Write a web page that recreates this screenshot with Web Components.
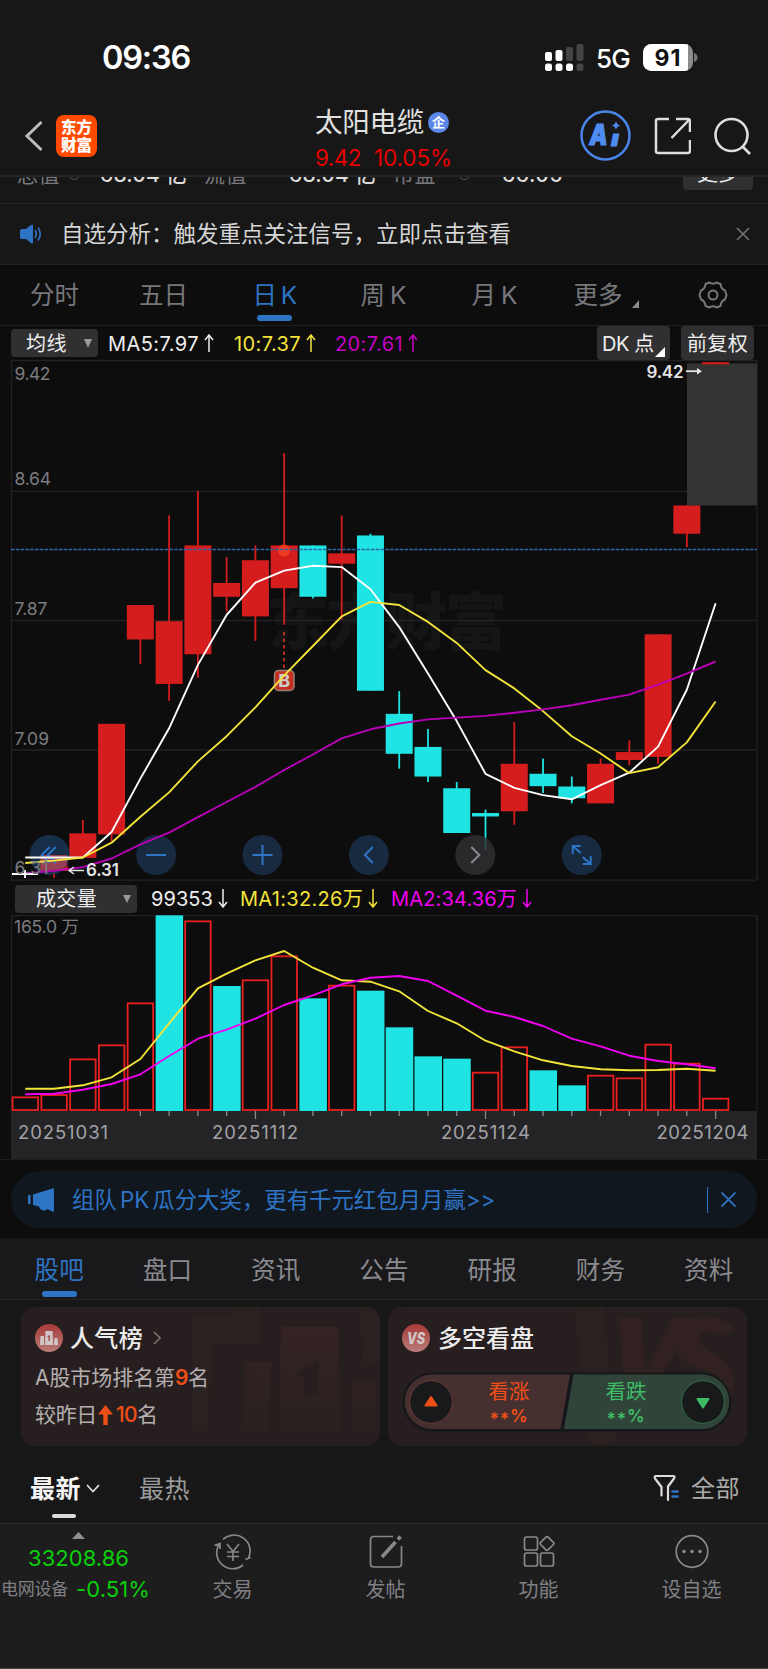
<!DOCTYPE html>
<html lang="zh-CN">
<head>
<meta charset="utf-8">
<title>太阳电缆</title>
<style>
    html { background: #171717; }
    body {
        margin: 0;
        width: 768px;
        height: 1669px;
        overflow: hidden;
        font-family: Inter, "Noto Sans CJK SC", sans-serif;
        color: #d8d8d8;
        background: #171717;
    }
    .cards { display: flex; gap: 8px; height: 139px; padding: 7px 21px; background: #171717; }
</style>
</head>
<body>
<status-bar></status-bar>
<stock-header></stock-header>
<quote-strip></quote-strip>
<signal-notice>自选分析：触发重点关注信号，立即点击查看</signal-notice>
<period-tabs></period-tabs>
<ma-toolbar></ma-toolbar>
<kline-chart></kline-chart>
<volume-toolbar></volume-toolbar>
<volume-chart></volume-chart>
<promo-banner>组队 PK 瓜分大奖，更有千元红包月月赢&gt;&gt;</promo-banner>
<section-tabs items="股吧,盘口,资讯,公告,研报,财务,资料"></section-tabs>
<div class="cards">
    <rank-card></rank-card>
    <versus-card></versus-card>
</div>
<feed-tabs></feed-tabs>
<bottom-bar></bottom-bar>

<script>
const define = (name, html) => {
    const template = document.createElement('template')
    template.innerHTML = html
    customElements.define(name, class extends HTMLElement {
        constructor() {
            super();
            this.attachShadow({mode: 'open'});
            this.shadowRoot.appendChild(template.content.cloneNode(true));
        }
    });
}

// a single line of text tracked out (or in) to the width given in w
class FitText extends HTMLElement {
    constructor() {
        super();
        this.attachShadow({mode: 'open'});
        this.shadowRoot.innerHTML = `
            <style>
                :host { display: block; white-space: nowrap; line-height: 1.2; flex: none; }
                span { display: inline-block; vertical-align: top; }
            </style>
            <span><slot></slot></span>`
    }

    connectedCallback() {
        const span = this.shadowRoot.querySelector('span')
        const width = Number(this.getAttribute('w'))
        if (!width) return
        const count = this.textContent.length
        span.style.letterSpacing = (width - span.getBoundingClientRect().width) / count + 'px'
        this.style.width = width + 'px'
    }
}
customElements.define('fit-text', FitText)

define('status-bar', `
    <style>
        :host { display: flex; align-items: center; height: 100px; padding: 14px 70px 0 102px; box-sizing: border-box; color: #fff; }
        .time { font-size: 32.500px; font-weight: 600; flex: 1; padding-top: 1px; }
        .net { font-size: 26px; font-weight: 500; margin: 3px 13px 0 12px; }
        svg { display: block; }
    </style>
    <div class="time"><fit-text w="88">09:36</fit-text></div>
    <svg width="39" height="27" viewBox="0 0 39 27">
        <g fill="#fff">
            <rect x="0" y="8" width="7" height="9" rx="2"/><rect x="10.500" y="6" width="7" height="11" rx="2"/>
            <rect x="0" y="19.500" width="7" height="7.500" rx="2.500"/><rect x="10.500" y="19.500" width="7" height="7.500" rx="2.500"/><rect x="21" y="19.500" width="7" height="7.500" rx="2.500"/>
        </g>
        <g fill="#444">
            <rect x="21" y="3" width="7" height="14" rx="2"/><rect x="31.500" y="0" width="7" height="17" rx="2"/><rect x="31.500" y="19.500" width="7" height="7.500" rx="2.500"/>
        </g>
    </svg>
    <div class="net"><fit-text w="34">5G</fit-text></div>
    <svg width="55" height="27" viewBox="0 0 55 27">
        <clipPath id="cell"><rect width="50" height="27" rx="8.500"/></clipPath>
        <g clip-path="url(#cell)"><rect width="50" height="27" fill="#8c8c8c"/><rect width="45" height="27" fill="#fff"/></g>
        <path d="M51 9q3.500 1 3.500 4.500T51 18z" fill="#777"/>
        <text x="24.500" y="22" text-anchor="middle" font-size="23" font-weight="700" fill="#111" textLength="26">91</text>
    </svg>
`)

define('stock-header', `
    <style>
        :host { display: flex; align-items: center; height: 77px; box-sizing: border-box; padding: 0 17px 4px 24px; border-bottom: 2px solid #262626; }
        .logo {
            display: grid; place-content: center; width: 41px; height: 42px; margin-left: 12px;
            border-radius: 8px; background: #ff4a00; color: #fff; text-align: center;
            font: 900 15.500px/17.500px "Noto Sans CJK SC", sans-serif;
        }
        .title { margin-left: 218px; width: 138px; padding-top: 4px; }
        .name { display: flex; align-items: center; gap: 4px; font-size: 27.500px; color: #e0e0e0; height: 36px; }
        .badge { width: 21px; height: 21px; border-radius: 50%; background: #5b87e8; color: #fff; font: 700 13px/20px "Noto Sans CJK SC", sans-serif; text-align: center; }
        .price { display: flex; gap: 13px; font-size: 22.500px; line-height: 1; color: #e60000; margin-top: 4px; }
        .icons { display: flex; align-items: center; margin-left: auto; }
        svg { display: block; }
    </style>
    <svg width="20" height="32" viewBox="0 0 20 32" fill="none" stroke="#bdbdbd" stroke-width="3"><path d="M17.500 2L3 16l14.500 14"/></svg>
    <div class="logo">东方<br>财富</div>
    <div class="title">
        <div class="name"><fit-text w="109">太阳电缆</fit-text><span class="badge">企</span></div>
        <div class="price"><fit-text w="46">9.42</fit-text><fit-text w="78">10.05%</fit-text></div>
    </div>
    <div class="icons">
        <svg width="51" height="51" viewBox="0 0 51 51">
            <circle cx="25.500" cy="25.500" r="24" fill="none" stroke="#4a86ea" stroke-width="2.500"/>
            <text x="9.500" y="35" font-size="29" font-weight="900" font-style="italic" fill="#4f8cf2" stroke="#4f8cf2" stroke-width="1.200" textLength="18" lengthAdjust="spacingAndGlyphs">A</text>
            <text x="31" y="36" font-size="21" font-weight="900" font-style="italic" fill="#4f8cf2" stroke="#4f8cf2" stroke-width=".8" textLength="8" lengthAdjust="spacingAndGlyphs">ı</text>
            <path d="M36 11q.8 3.700 4.300 4.500-3.500.8-4.300 4.500-.8-3.700-4.300-4.500 3.500-.8 4.300-4.500z" fill="#4f8cf2"/>
        </svg>
        <svg width="37" height="38" viewBox="0 0 37 38" fill="none" stroke="#ddd" stroke-width="2.500" style="margin-left:23px">
            <path d="M15 2H4Q2 2 2 4v30q0 2 2 2h30q2 0 2-2V23M22 2h12q2 0 2 2v11M35 3L17.500 21"/>
        </svg>
        <svg width="37" height="38" viewBox="0 0 37 38" fill="none" stroke="#ddd" stroke-width="2.600" style="margin-left:23px">
            <circle cx="17.500" cy="18" r="16"/><path d="M28 29l8 8"/>
        </svg>
    </div>
`)

// quote details scrolled up under the header, only the lower part of the line shows
define('quote-strip', `
    <style>
        :host { display: block; height: 26px; overflow: hidden; border-bottom: 1px solid #242424; }
        .line { display: flex; align-items: center; margin-top: -19px; height: 32px; font-size: 21px; padding-left: 17px; color: #77777c; }
        .value { color: #dcdcdc; font-weight: 500; }
        fit-text { margin-top: 1px; }
        i { width: 9px; height: 9px; border: 1.500px solid #55555a; border-radius: 50%; margin-left: 9px; }
        .more { margin-left: auto; margin-right: 15px; width: 70px; height: 32px; background: #303032; border-radius: 4px; color: #e8e8e8; text-align: center; line-height: 29px; }
    </style>
    <div class="line">
        <fit-text w="43">总值</fit-text><i></i>
        <fit-text class="value" w="87" style="margin-left:20px">68.04 亿</fit-text>
        <fit-text w="43" style="margin-left:17px">流值</fit-text>
        <fit-text class="value" w="87" style="margin-left:42px">68.04 亿</fit-text>
        <fit-text w="43" style="margin-left:17px">市盈</fit-text><i style="margin-left:23px"></i>
        <fit-text class="value" w="61" style="margin-left:32px">66.05</fit-text>
        <span class="more">更多</span>
    </div>
`)

define('signal-notice', `
    <style>
        :host { display: flex; align-items: center; height: 60px; border-bottom: 1px solid #242426; padding: 0 18px 0 19px; }
        .text { flex: 1; margin-left: 19px; font-size: 22.500px; line-height: 30px; white-space: nowrap; color: #d6d6d6; }
    </style>
    <svg width="23" height="20" viewBox="0 0 23 20">
        <path d="M1 7q0-2 2-2h4l5-4q2-1.500 2 1v16q0 2.500-2 1l-5-4H3q-2 0-2-2z" fill="#2e74c4"/>
        <path d="M16 6q2.500 4 0 8M19 3.500q4.500 6.500 0 13" fill="none" stroke="#2e74c4" stroke-width="1.700"/>
    </svg>
    <div class="text"><slot></slot></div>
    <svg width="14" height="14" viewBox="0 0 14 14" stroke="#77777c" stroke-width="1.500"><path d="M1 1l12 12M13 1L1 13"/></svg>
`)

define('period-tabs', `
    <style>
        :host { display: grid; grid-template-columns: 109px 109px 116px 98px 124px 84px 1fr; height: 60px; background: #0d0d0d; border-bottom: 1px solid #1f1f1f; font-size: 24.500px; color: #77777c; }
        div { position: relative; display: flex; align-items: center; justify-content: center; }
        fit-text { padding-top: 1px; }
        .on { color: #2e74c4; }
        .on fit-text { margin-right: 4px; }
        .on::after { content: ""; position: absolute; bottom: 4px; left: 39px; width: 35px; height: 6px; border-radius: 3px; background: #2e74c4; }
        .corner { position: absolute; left: 76px; top: 35px; }
    </style>
    <div><fit-text w="49">分时</fit-text></div>
    <div><fit-text w="49">五日</fit-text></div>
    <div class="on"><fit-text w="43">日 K</fit-text></div>
    <div><fit-text w="45">周 K</fit-text></div>
    <div><fit-text w="45">月 K</fit-text></div>
    <div><fit-text w="49">更多</fit-text><svg class="corner" width="7" height="8"><path d="M7 0v8H0z" fill="#8a8a8e"/></svg></div>
    <div style="padding-left:18px">
        <svg width="30" height="30" viewBox="0 0 30 30" fill="none" stroke="#77777c" stroke-width="2" stroke-linejoin="round">
            <path d="M11.500 2.500Q15 5 18.500 2.500L22.500 4Q23 9 27 10.500L28.500 15 27 19.500Q23 21 22.500 26L18.500 27.500Q15 25 11.500 27.500L7.500 26Q7 21 3 19.500L1.500 15 3 10.500Q7 9 7.500 4z"/>
            <circle cx="15" cy="15" r="4.500"/>
        </svg>
    </div>
`)

define('ma-toolbar', `
    <style>
        :host { display: flex; align-items: center; height: 34px; background: #0d0d0d; padding: 0 14px 0 11px; font-size: 20px; }
        .pick { display: flex; align-items: center; width: 87px; height: 28px; box-sizing: border-box; padding-left: 15px; background: #303032; border-radius: 4px; color: #eee; margin-right: 10px; }
        .pick svg { margin-left: 17px; }
        .arrow { margin: 0 0 0 5px; }
        fit-text { padding-top: 1px; }
        .btn { position: relative; display: flex; align-items: center; height: 34px; box-sizing: border-box; background: #303032; border-radius: 4px; color: #eee; }
    </style>
    <span class="pick"><fit-text w="41">均线</fit-text><svg width="8" height="9"><path d="M0 0h8L4 9z" fill="#999"/></svg></span>
    <fit-text w="91" style="color:#eee">MA5:7.97</fit-text>
    <svg class="arrow" width="10" height="18" fill="none" stroke="#eee" stroke-width="1.500"><path d="M5 18V1M1 6l4-5 4 5"/></svg>
    <fit-text w="67" style="color:#f3e43a;margin-left:20px">10:7.37</fit-text>
    <svg class="arrow" width="10" height="18" fill="none" stroke="#f3e43a" stroke-width="1.500"><path d="M5 18V1M1 6l4-5 4 5"/></svg>
    <fit-text w="68" style="color:#c400c4;margin-left:19px">20:7.61</fit-text>
    <svg class="arrow" width="10" height="18" fill="none" stroke="#c400c4" stroke-width="1.500"><path d="M5 18V1M1 6l4-5 4 5"/></svg>
    <span class="btn" style="margin-left:auto;width:73px;padding-left:5px"><fit-text w="52">DK 点</fit-text>
        <svg style="position:absolute;right:5px;bottom:3px" width="10" height="10"><path d="M10 0v10H0z" fill="#fff"/></svg></span>
    <span class="btn" style="margin-left:11px;width:73px;padding-left:6px"><fit-text w="61">前复权</fit-text></span>
`)

define('volume-toolbar', `
    <style>
        :host { display: flex; align-items: center; height: 35px; box-sizing: border-box; padding: 2px 15px 0 15px; background: #0d0d0d; font-size: 20px; }
        .pick { display: flex; align-items: center; width: 122px; height: 28px; box-sizing: border-box; padding-left: 21px; background: #303032; border-radius: 4px; color: #eee; margin-right: 14px; }
        .pick svg { margin-left: 26px; }
        .arrow { margin-left: 5px; }
    </style>
    <span class="pick"><fit-text w="61">成交量</fit-text><svg width="8" height="8"><path d="M0 0h8L4 8z" fill="#999"/></svg></span>
    <fit-text w="62" style="color:#eee">99353</fit-text>
    <svg class="arrow" width="10" height="19" fill="none" stroke="#eee" stroke-width="1.500"><path d="M5 0v18M1 13l4 5 4-5"/></svg>
    <fit-text w="123" style="color:#f3e43a;margin-left:12px">MA1:32.26万</fit-text>
    <svg class="arrow" width="10" height="19" fill="none" stroke="#f3e43a" stroke-width="1.500"><path d="M5 0v18M1 13l4 5 4-5"/></svg>
    <fit-text w="126" style="color:#f000f0;margin-left:13px">MA2:34.36万</fit-text>
    <svg class="arrow" width="10" height="19" fill="none" stroke="#f000f0" stroke-width="1.500"><path d="M5 0v18M1 13l4 5 4-5"/></svg>
`)

const RED = '#d61d1d', CYAN = '#20e3e3', YELLOW = '#f3e43a'
const centerX = i => 25.3 + i * 28.763
const polyline = (values, toY, color) =>
    `<polyline fill="none" stroke="${color}" stroke-width="1.900" stroke-linejoin="round" points="${values.map((v, i) => centerX(i).toFixed(1) + ',' + toY(v).toFixed(1)).join(' ')}"/>`

// [high, body top, body bottom, low, falling], in chart units counted down from the top
const candles = [
    null,
    [1452, 1452, 1498, 1518], [1350, 1389, 1460, 1460], [1071, 1071, 1392, 1412], [726, 726, 826, 898],
    [466, 773, 955, 1004], [395, 553, 869, 937], [587, 662, 702, 745], [553, 596, 759, 830], [285, 553, 677, 783],
    [553, 553, 702, 707, 1], [466, 576, 606, 768], [519, 524, 975, 975, 1], [976, 1042, 1158, 1201, 1],
    [1086, 1138, 1224, 1240, 1], [1240, 1258, 1388, 1388, 1], [1320, 1330, 1340, 1437, 1], [1066, 1187, 1325, 1364],
    [1172, 1216, 1252, 1272, 1], [1224, 1253, 1287, 1302, 1], [1172, 1187, 1302, 1302], [1119, 1153, 1176, 1191],
    [811, 811, 1167, 1187], [437, 437, 519, 558], [21, 21, 27, 27]
]
const ma5 = [1459, 1459, 1459, 1385, 1230, 1084, 900, 755, 661, 626, 612, 616, 680, 790, 925, 1063, 1216, 1257, 1278, 1290, 1249, 1213, 1137, 972, 721]
const ma10 = [1475, 1468, 1459, 1416, 1341, 1270, 1180, 1107, 1023, 930, 845, 759, 717, 726, 775, 836, 915, 968, 1034, 1107, 1157, 1214, 1197, 1125, 1006]
const ma20 = [1505, 1498, 1487, 1462, 1421, 1387, 1342, 1298, 1254, 1205, 1160, 1113, 1087, 1070, 1058, 1053, 1048, 1039, 1029, 1017, 1001, 986, 957, 925, 890]

class KlineChart extends HTMLElement {
    constructor() {
        super();
        this.attachShadow({mode: 'open'});
    }

    connectedCallback() {
        const unit = 2.9037
        const y = v => v / unit - 5
        const bars = candles.map((c, i) => {
            if (!c) return ''
            const x = centerX(i), color = c[4] ? CYAN : RED
            return `<rect x="${x - 0.9}" y="${y(c[0])}" width="1.800" height="${(c[3] - c[0]) / unit}" fill="${color}"/>
                <rect x="${x - 13.5}" y="${y(c[1])}" width="27" height="${(c[2] - c[1]) / unit}" fill="${color}"/>`
        }).join('')
        const icons = ['M0-8l-8 8 8 8M6-8l-8 8 8 8', 'M-10 0h20', 'M-10 0h20M0-10v20', 'M4-8l-8 8 8 8', 'M-4-8l8 8-8 8', 'M-9-1v-8h8M-9-9l8 7M9 1v8H1M9 9L1 2']
        // the first button sits over a candle and stays clear enough to show it
        const fills = ['fill="#1b3a5e" fill-opacity=".75"', 'fill="#182a40"', 'fill="#182a40"', 'fill="#182a40"', 'fill="#303033" fill-opacity=".85"', 'fill="#182a40"']
        const buttons = icons.map((d, i) => `
            <g transform="translate(${49.7 + i * 106.4} 495)">
                <circle r="20" ${fills[i]}/>
                ${i == 0 ? '<path d="M-9.500 0H17.800A20 20 0 0 1 12 15.800H-9.500z" fill="#d04a5c" fill-opacity=".6"/>' : ''}
                <path d="${d}" fill="none" stroke="${i == 4 ? '#8a8a8e' : '#2e74c4'}" stroke-width="2"/>
            </g>`).join('')
        this.shadowRoot.innerHTML = `
            <style>
                :host { display: block; height: 520px; background: #0d0d0d; }
                svg { display: block; overflow: visible; }
                .axis { font-size: 17.500px; fill: #7c7c80; }
                .mark { font-size: 17px; font-weight: 600; fill: #e4e4e4; }
            </style>
            <svg width="768" height="520" viewBox="0 0 768 520">
                <text x="267" y="285" font-size="62" font-weight="900" fill="#151515" textLength="240">东方财富</text>
                <path d="M11.500 0v520M757 0v520M11 .5h746M11 131.400h746M11 260.500h746M11 390h746M11 520.200h746" stroke="#222" stroke-width="1.300" fill="none"/>
                <rect x="687" y="3.300" width="70" height="142.200" fill="#333"/>
                ${bars}
                <circle cx="284" cy="190.600" r="6.200" fill="#f0391f"/>
                <path d="M11 189.600h746" stroke="#2c66ab" stroke-width="1.500" stroke-dasharray="3.500 1.300"/>
                <path d="M284 272v38" stroke="#c2301f" stroke-width="1.800" stroke-dasharray="3.500 3"/>
                <g class="axis">
                    <text x="14.500" y="19.800" textLength="36">9.42</text>
                    <text x="14.500" y="124.800" textLength="36.500">8.64</text>
                    <text x="14.500" y="255" textLength="33">7.87</text>
                    <text x="14.500" y="384.500" textLength="34.500">7.09</text>
                </g>
                <rect x="274.500" y="310.500" width="19.500" height="20" rx="4" fill="#c2301f" stroke="#9a8078" stroke-width="1.500"/>
                <text x="284.200" y="327" text-anchor="middle" font-size="18" font-weight="700" fill="#ccc">B</text>
                ${buttons}
                ${polyline(ma5, y, '#fff')}
                ${polyline(ma10, y, YELLOW)}
                ${polyline(ma20, y, '#b800b8')}
                <path d="M12 514h26M25 510v8" stroke="#fff" stroke-width="1.800"/>
                <text class="axis" x="14.500" y="514.300" textLength="34">6.31</text>
                <path d="M84 510.500H69m5-3.500l-5 3.500 5 3.500" stroke="#e4e4e4" stroke-width="1.500" fill="none"/>
                <text class="mark" x="86" y="516" textLength="33">6.31</text>
                <text class="mark" x="646.500" y="17.800" textLength="37">9.42</text>
                <path d="M686 11.200h12" stroke="#e4e4e4" stroke-width="1.800"/>
                <path d="M697 8l5 3.200-5 3.200z" fill="#e4e4e4"/>
            </svg>`
    }
}
customElements.define('kline-chart', KlineChart)

// bar tops, in thirds of a pixel from y = -35
const volumes = [652, 645, 538, 496, 370, 106, 124, 318, 301, 229, 355, 317, 332, 442, 529, 536, 578, 502, 571, 616, 587, 595, 494, 551, 656]
const fallingDays = [5, 7, 10, 12, 13, 14, 15, 18, 19]
const volMa1 = [626, 626, 616, 592, 537, 430, 325, 281, 241, 213, 263, 301, 305, 334, 393, 430, 482, 514, 541, 558, 568, 571, 570, 566, 572]
const volMa2 = [643, 641, 629, 612, 583, 528, 476, 449, 416, 375, 346, 313, 293, 288, 303, 347, 392, 411, 438, 476, 499, 527, 543, 553, 565]

class VolumeChart extends HTMLElement {
    constructor() {
        super();
        this.attachShadow({mode: 'open'});
    }

    connectedCallback() {
        const y = v => v / 3 - 35
        const bars = volumes.map((v, i) => {
            const x = centerX(i) - 13.5
            if (fallingDays.includes(i)) {
                return `<rect x="${x}" y="${y(v)}" width="27.500" height="${196 - y(v)}" fill="${CYAN}"/>`
            }
            return `<rect x="${x + 0.8}" y="${y(v)}" width="25.500" height="${195 - y(v)}" fill="none" stroke="#ea2020" stroke-width="1.800"/>`
        }).join('')
        let ticks = ''
        for (let i = 4; i < 25; i++) ticks += `M${centerX(i)} 196v${i % 8 ? 5 : 8}`
        this.shadowRoot.innerHTML = `
            <style>
                :host { display: block; height: 245px; background: #0d0d0d; }
                svg { display: block; }
                .date { font-size: 18.500px; fill: #a2a2a6; }
            </style>
            <svg width="768" height="245" viewBox="0 0 768 245">
                <path d="M11.500 0v196M757 0v196M11 .5h746" stroke="#222" stroke-width="1.300"/>
                <rect x="11" y="196" width="746" height="48" fill="#242426"/>
                <path d="M0 245h768" stroke="#1e1e1e" stroke-width="2"/>
                <text x="14" y="17.500" font-size="17.500" fill="#7c7c80" textLength="65">165.0 万</text>
                ${bars}
                <path d="${ticks}" stroke="#8a8a8e" stroke-width="1.300"/>
                ${polyline(volMa1, y, YELLOW)}
                ${polyline(volMa2, y, '#f000f0')}
                <g class="date">
                    <text x="18" y="223.500" textLength="90">20251031</text>
                    <text x="212" y="223.500" textLength="86">20251112</text>
                    <text x="441" y="223.500" textLength="89">20251124</text>
                    <text x="656.500" y="223.500" textLength="92">20251204</text>
                </g>
            </svg>`
    }
}
customElements.define('volume-chart', VolumeChart)

define('promo-banner', `
    <style>
        :host { display: block; height: 78px; box-sizing: border-box; padding: 11px 11px 0; background: #0d0d0d; }
        .pill { display: flex; align-items: center; height: 57px; border-radius: 28px; background: #10171e; padding: 0 21px 0 17px; color: #2e74c4; }
        .text { flex: 1; margin: -3px 0 0 17px; font-size: 22.400px; white-space: nowrap; word-spacing: -3.200px; }
        .bar { width: 1.500px; height: 26px; background: #2e74c4; margin-right: 13px; }
    </style>
    <div class="pill">
        <svg width="27" height="24" viewBox="0 0 27 24" fill="#2e74c4"><path d="M0 7h2.500v9H0zM5 6.500L24.500.500H26v23h-1.500L19 21q-1 2-4 1.500-3-.5-4-4L5 17z"/></svg>
        <div class="text"><slot></slot></div>
        <span class="bar"></span>
        <svg width="15" height="15" stroke="#2e74c4" stroke-width="1.800"><path d="M.500.500l14 14M14.500.500l-14 14"/></svg>
    </div>
`)

class SectionTabs extends HTMLElement {
    constructor() {
        super();
        this.attachShadow({mode: 'open'});
    }

    connectedCallback() {
        this.shadowRoot.innerHTML = `
            <style>
                :host { display: flex; height: 61px; padding: 0 5px; background: #19191b; border-bottom: 1px solid #232325; font-size: 24.500px; color: #8a8a8e; }
                div { position: relative; flex: 1; display: flex; align-items: center; justify-content: center; padding-top: 4px; }
                .on { color: #2e74c4; }
                .on::after { content: ""; position: absolute; left: 37px; bottom: 2px; width: 35px; height: 6px; border-radius: 3px; background: #2e74c4; }
            </style>
            ${this.getAttribute('items').split(',').map((item, i) => `<div class="${i ? '' : 'on'}"><fit-text w="49.500">${item}</fit-text></div>`).join('')}`
    }
}
customElements.define('section-tabs', SectionTabs)

define('rank-card', `
    <style>
        :host { position: relative; display: block; width: 359px; height: 139px; border-radius: 14px; background: #271f1f; overflow: hidden; }
        .art { position: absolute; right: 0; top: 0; }
        .body { position: relative; padding: 17px 0 0 14px; font-size: 21px; color: #b4aeae; }
        .head { display: flex; align-items: center; height: 28px; font-size: 24px; font-weight: 500; color: #ececec; }
        .head fit-text { padding-top: 2px; }
        .row { display: flex; align-items: center; height: 37px; }
        .row svg { flex: none; }
        b { font-weight: 600; color: #f04e17; }
        .num { color: #f04e17; font-weight: 500; }
    </style>
    <svg class="art" width="190" height="139" viewBox="0 0 190 139">
        <defs><linearGradient id="fade" x2="0" y2="1"><stop stop-color="#352323"/><stop offset="1" stop-color="#292020"/></linearGradient></defs>
        <path d="M3 8h39V0h28v36H22l-5 88H3z" fill="#2a2121"/>
        <path d="M55 55h26l-3 70H52zM91 20h57l3 105H89zM161 73h24l3 52h-25z" fill="url(#fade)"/>
        <path d="M170 0h20v55h-18z" fill="#2a2121"/>
        <path d="M107 65l22-11v34h-15V70h-7z" fill="#271f1f"/>
    </svg>
    <div class="body">
        <div class="head">
            <svg width="28" height="28" viewBox="0 0 28 28">
                <defs><linearGradient id="disc" x2="0" y2="1"><stop stop-color="#a83a38"/><stop offset="1" stop-color="#b87c78"/></linearGradient></defs>
                <circle cx="14" cy="14" r="14" fill="url(#disc)"/>
                <path d="M5.500 12H9v9H5zM10.500 7h7l.5 14h-8zM19.500 14h3l.5 7h-4z" fill="#d0c8c8"/>
                <path d="M12.500 12l2.500-1v6h-1.500v-4h-1z" fill="#a84a48"/>
            </svg>
            <fit-text w="73" style="margin-left:7px">人气榜</fit-text>
            <svg width="8" height="14" style="margin-left:10px" fill="none" stroke="#77706f" stroke-width="1.600"><path d="M1 1l6 6-6 6"/></svg>
        </div>
        <div class="row" style="margin-top:7px"><fit-text w="140">A股市场排名第</fit-text><b><fit-text w="13">9</fit-text></b><fit-text w="20">名</fit-text></div>
        <div class="row"><fit-text w="62">较昨日</fit-text>
            <svg width="15" height="20" style="margin:0 3px 0 1px"><path d="M7.500 0L15 9.500H9.700V20H5.300V9.500H0z" fill="#f04e17"/></svg>
            <span class="num"><fit-text w="21">10</fit-text></span><fit-text w="20">名</fit-text></div>
    </div>
`)

define('versus-card', `
    <style>
        :host { position: relative; display: block; width: 359px; height: 139px; border-radius: 14px; background: #271f1f; overflow: hidden; }
        .art { position: absolute; right: 0; top: 0; }
        .body { position: relative; padding: 17px 0 0 14px; }
        .head { display: flex; align-items: center; height: 28px; font-size: 24px; font-weight: 500; color: #ececec; }
        .head fit-text { padding-top: 2px; }
        .pill { display: block; margin-top: 20px; font-size: 20.500px; }
    </style>
    <svg class="art" width="190" height="139" viewBox="0 0 190 139">
        <path d="M17 0h30l12 135-26 3z" fill="#2c2121"/>
        <g fill="#312221"><path d="M62 11h23l3 55 27-55h24L91 89H68z"/><path d="M179 23Q160 3 136 14q-22 11-15 33 5 10 29 17 11 4 7 16l-12 14h-25l-5 18q41 8 57-18 14-28-10-44-22-10-20-20 5-10 22-1z"/></g>
    </svg>
    <div class="body">
        <div class="head">
            <svg width="28" height="28" viewBox="0 0 28 28">
                <defs><linearGradient id="disc" x2="0" y2="1"><stop stop-color="#a83a38"/><stop offset="1" stop-color="#b87c78"/></linearGradient></defs>
                <circle cx="14" cy="14" r="14" fill="url(#disc)"/>
                <text x="5" y="20" font-size="16" font-weight="800" font-style="italic" fill="#d0c8c8" textLength="18" lengthAdjust="spacingAndGlyphs">VS</text>
            </svg>
            <fit-text w="96" style="margin-left:8px">多空看盘</fit-text>
        </div>
        <svg class="pill" width="330" height="60" viewBox="0 0 330 60">
            <rect x=".5" y=".5" width="329" height="59" rx="29.500" fill="#15171a"/>
            <path d="M30 2.500h138L158.500 57H30a27.250 27.250 0 0 1 0-54.500z" fill="#46302f"/>
            <path d="M171.500 2.500H300a27.250 27.250 0 0 1 0 54.500H162z" fill="#30443a"/>
            <circle cx="29" cy="30" r="21.300" fill="#17191b" stroke="#6a3834"/>
            <circle cx="301" cy="30" r="21.300" fill="#17191b" stroke="#2f6a4a"/>
            <path d="M29 25l5.500 8.500h-11z" fill="#f04e17" stroke="#f04e17" stroke-width="2" stroke-linejoin="round"/>
            <path d="M301 35.500l-5.500-8.500h11z" fill="#3fbb66" stroke="#3fbb66" stroke-width="2" stroke-linejoin="round"/>
            <g fill="#f04e17"><text x="86.500" y="26.500" textLength="41">看涨</text><text x="87.500" y="50" font-size="17.500" font-weight="600" textLength="38"><tspan dy="3">**</tspan><tspan dy="-3">%</tspan></text></g>
            <g fill="#3fbb66"><text x="203.500" y="26.500" textLength="41">看跌</text><text x="204.500" y="50" font-size="17.500" font-weight="600" textLength="38"><tspan dy="3">**</tspan><tspan dy="-3">%</tspan></text></g>
        </svg>
    </div>
`)

define('feed-tabs', `
    <style>
        :host { display: flex; align-items: center; height: 71px; box-sizing: border-box; padding: 0 28px 0 30px; font-size: 25px; color: #9b9b9b; border-bottom: 1.500px solid #2c2c2e; }
        fit-text { padding-top: 2px; }
        .on { position: relative; display: flex; align-items: center; gap: 5px; width: 109px; height: 71px; font-weight: 700; color: #f4f4f4; }
        .on::after { content: ""; position: absolute; left: 22px; bottom: 6px; width: 24px; height: 4px; border-radius: 2px; background: #dadada; }
        .filter { margin-left: auto; margin-right: 12px; }
    </style>
    <div class="on"><fit-text w="51">最新</fit-text><svg width="14" height="9" fill="none" stroke="#ddd" stroke-width="1.800"><path d="M1 1l6 6.500L13 1"/></svg></div>
    <fit-text w="51">最热</fit-text>
    <svg class="filter" width="26" height="28" viewBox="0 0 26 28" fill="none" stroke="#ddd" stroke-width="2.200" stroke-linecap="round" stroke-linejoin="round">
        <path d="M8.500 21.500V13L2 4.500Q1 2 3 2h17q2.500 0 1 2.500L15 12.500v13.500"/><path d="M19.500 17.500h5M19.500 22.500h5" stroke="#2e74c4" stroke-width="2.600"/>
    </svg>
    <fit-text w="49" style="font-size:24px;color:#aaa">全部</fit-text>
`)

define('nav-item', `
    <style>
        :host { display: flex; flex-direction: column; align-items: center; width: 153px; padding-top: 10px; box-sizing: border-box; font-size: 20px; color: #808084; }
        .icon { height: 36px; }
        .label { margin-top: 8px; line-height: 24px; }
    </style>
    <div class="icon"><slot name="icon"></slot></div>
    <div class="label"><slot></slot></div>
`)

define('bottom-bar', `
    <style>
        :host { display: flex; height: 145px; box-sizing: border-box; background: #1d1d1e; border-bottom: 1.500px solid #454545; }
        .index { width: 156px; padding: 8px 0 0 1px; box-sizing: border-box; color: #0ad00a; font-size: 22px; }
        .up { display: block; margin-left: 71px; }
        .value { margin: 6px 0 0 27px; }
        .change { display: flex; align-items: center; gap: 8px; margin-top: 5px; }
        .change .name { font-size: 17px; color: #808084; }
        svg { display: block; fill: none; stroke: #88888c; stroke-width: 1.700; }
    </style>
    <div class="index">
        <svg class="up" width="13" height="7"><path d="M6.500 0L13 7H0z" fill="#909094" stroke="none"/></svg>
        <div class="value"><fit-text w="101">33208.86</fit-text></div>
        <div class="change"><fit-text class="name" w="67">电网设备</fit-text><fit-text w="74">-0.51%</fit-text></div>
    </div>
    <nav-item>
        <svg slot="icon" width="38" height="36" viewBox="0 0 38 36">
            <path d="M9 5.500A16 16 0 0 1 34.500 24M36.500 23.500l-5 2M29 31A16 16 0 0 1 5 10.500M.500 11.500L6 9.500V15M13 10l6 7.500L25 10M19 17.500V27M13 18h12M13 22.500h12"/>
        </svg>交易
    </nav-item>
    <nav-item>
        <svg slot="icon" width="34" height="36" viewBox="0 0 34 36">
            <path d="M24 2.500H5q-3.500 0-3.500 3.500v23.500q0 3.500 3.500 3.500h24q3.500 0 3.500-3.500V12"/>
            <path d="M13 23L26.500 8" stroke-width="3.600"/><path d="M29 5.500L31.500 2.500" stroke-width="3.600"/>
        </svg>发帖
    </nav-item>
    <nav-item>
        <svg slot="icon" width="32" height="36" viewBox="0 0 32 36">
            <rect x="1.500" y="3" width="13" height="13" rx="2"/><rect x="1.500" y="19" width="13" height="13" rx="2"/><rect x="17.500" y="19" width="13" height="13" rx="2"/>
            <rect x="18.700" y="4.200" width="10.500" height="10.500" rx="1.500" transform="rotate(45 24 9.500)"/>
        </svg>功能
    </nav-item>
    <nav-item>
        <svg slot="icon" width="34" height="36" viewBox="0 0 34 36">
            <circle cx="17" cy="17.500" r="15.800"/><g fill="#88888c" stroke="none"><circle cx="9" cy="17.500" r="1.800"/><circle cx="17" cy="17.500" r="1.800"/><circle cx="25" cy="17.500" r="1.800"/></g>
        </svg>设自选
    </nav-item>
`)
</script>
</body>
</html>
